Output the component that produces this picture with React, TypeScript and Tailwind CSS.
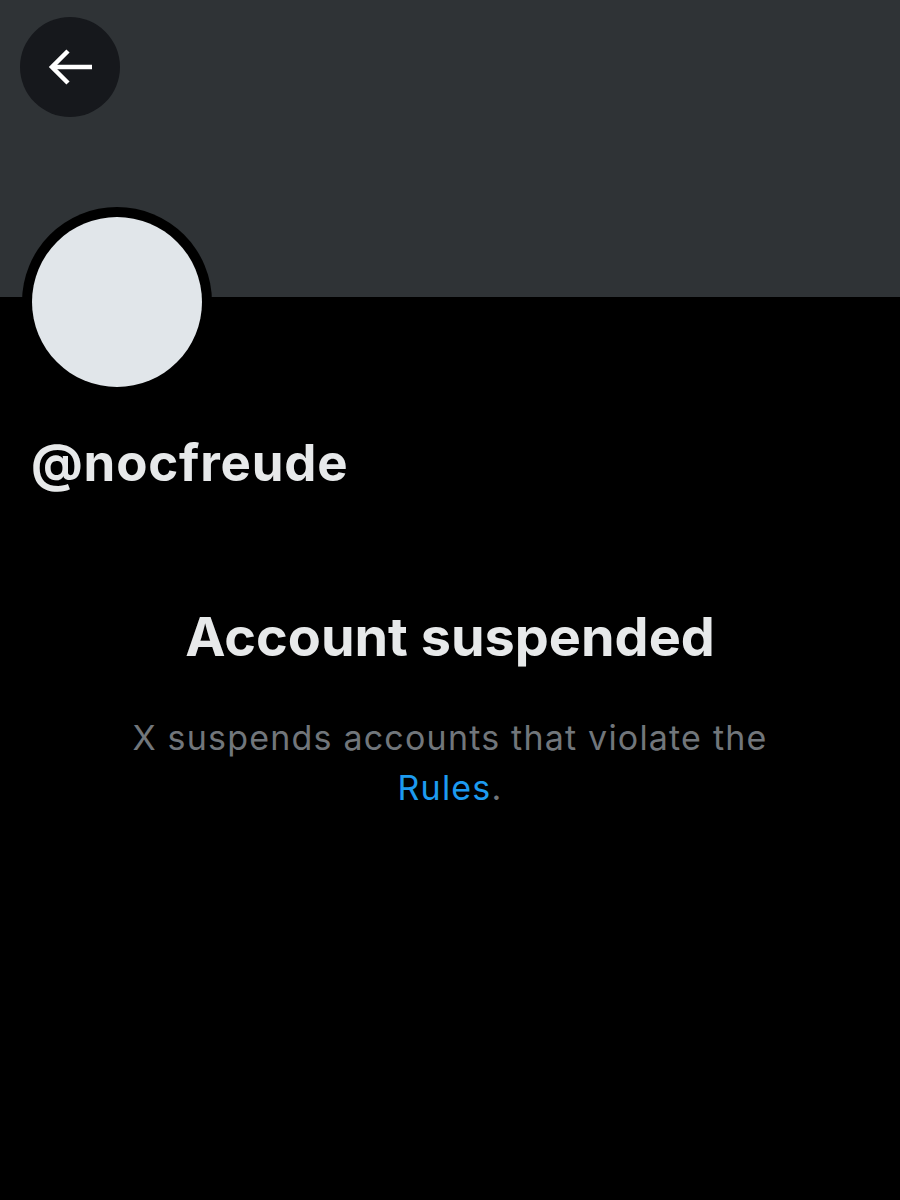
import React from "react";

export default function App() {
  return (
    <div className="w-[900px] h-[1200px] bg-black flex flex-col" style={{ fontFamily: "Inter, 'Noto Sans', sans-serif" }}>
      <div className="h-[297px] bg-[#2f3336] shrink-0 pt-[17px] pl-[20px]">
        <div className="w-[100px] h-[100px] rounded-full bg-[#16181c] flex items-center justify-center">
          <svg width="46" height="38" viewBox="0 0 46 38" fill="none">
            <path d="M21 3 L5 19 L21 35" stroke="white" strokeWidth="4.5" strokeLinecap="butt" strokeLinejoin="miter" />
            <path d="M6 19 H45" stroke="white" strokeWidth="4.5" />
          </svg>
        </div>
      </div>
      <div className="px-[22px] -mt-[90px]">
        <div className="w-[190px] h-[190px] rounded-full bg-black p-[10px]">
          <div className="w-full h-full rounded-full bg-[#e1e6ea]" />
        </div>
      </div>
      <div className="px-[31px] mt-[36px] text-[51px] leading-[60px] font-bold text-[#e7e9ea] tracking-[0.8px]">@nocfreude</div>
      <div className="mt-[112px] flex flex-col items-center">
        <div className="text-[54px] leading-[64px] font-bold text-[#e7e9ea] tracking-[0px]">Account suspended</div>
        <div className="mt-[44px] w-[680px] text-center text-[34px] leading-[50px] text-[#71767b] tracking-[1.2px]">
          X suspends accounts that violate the <span className="text-[#1d9bf0]">Rules</span>.
        </div>
      </div>
    </div>
  );
}
